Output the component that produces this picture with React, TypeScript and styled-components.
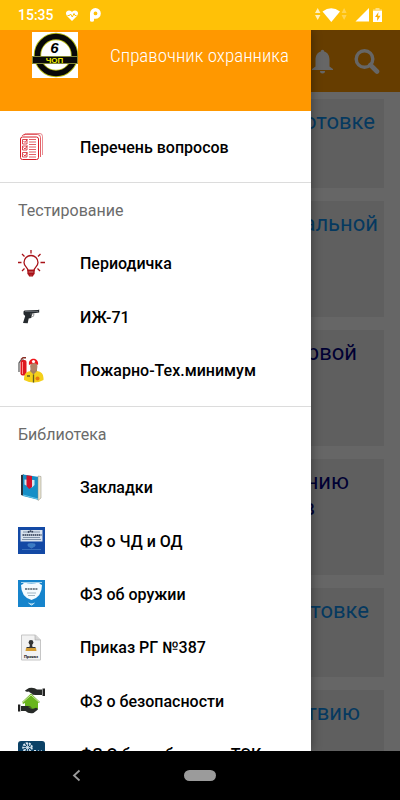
import React from "react";
import styled, { createGlobalStyle } from "styled-components";

const GlobalStyle = createGlobalStyle`
  * { box-sizing: border-box; }
  body { margin: 0; background: #fff; font-family: Roboto, sans-serif; }
  #root { height: 100vh; }
`;

const Screen = styled.div`
  display: flex;
  flex-direction: column;
  height: 100vh;
  overflow: hidden;
`;

const StatusBar = styled.header`
  display: flex;
  align-items: center;
  flex: none;
  height: 30px;
  padding: 0 18px;
  background: #ffc107;
  color: #fff;
`;

const Clock = styled.time`
  font-size: 14px;
  line-height: 16px;
  font-weight: 500;
  margin-right: 12px;
`;

const StatusIcons = styled.div<{ $end?: boolean }>`
  display: flex;
  align-items: center;
  gap: ${(p) => (p.$end ? 3 : 12)}px;
  margin-left: ${(p) => (p.$end ? "auto" : "0")};
`;

const Stage = styled.div`
  position: relative;
  flex: 1;
  min-height: 0;
  overflow: hidden;
`;

const Page = styled.main`
  height: 100%;
  overflow: hidden;
  background: #fff;
`;

const AppBar = styled.div`
  display: flex;
  align-items: center;
  justify-content: flex-end;
  gap: 20px;
  height: 62px;
  padding: 0 20px;
  background: #ff9800;
`;

const IconButton = styled.button`
  display: flex;
  padding: 0;
  border: 0;
  background: none;
`;

const Cards = styled.div`
  display: flex;
  flex-direction: column;
  gap: 13px;
  padding: 7px 16px;
`;

const Card = styled.a<{ $tall?: boolean; $visited?: boolean; $inset: number }>`
  flex: none;
  min-height: ${(p) => (p.$tall ? 116 : 89)}px;
  padding: 10px ${(p) => p.$inset}px 10px 16px;
  background: #ededed;
  color: ${(p) => (p.$visited ? "#000080" : "#0e90ee")};
  font-size: 22px;
  line-height: 26px;
  text-align: right;
  text-decoration: none;
`;

const CardLine = styled.span<{ $inset?: number }>`
  display: block;
  padding-right: ${(p) => p.$inset ?? 0}px;
`;

const Scrim = styled.div`
  position: absolute;
  inset: 0;
  background: rgba(0, 0, 0, 0.6);
`;

const Drawer = styled.aside`
  position: absolute;
  top: 0;
  bottom: 0;
  left: 0;
  width: 80%;
  max-width: 311px;
  overflow: hidden;
  background: #fff;
  box-shadow: 0 0 10px rgba(0, 0, 0, 0.4);
`;

const DrawerHeader = styled.div`
  display: flex;
  align-items: flex-start;
  gap: 32px;
  height: 81px;
  padding: 2px 16px 0 32px;
  background: #ff9800;

  svg { flex: none; }
`;

const DrawerTitle = styled.h1`
  margin: 0;
  padding-top: 12px;
  color: #fff;
  font-family: "Liberation Sans Narrow", "Roboto Condensed", Roboto, sans-serif;
  font-size: 19px;
  line-height: 24px;
  font-weight: 300;
  white-space: nowrap;
`;

const Group = styled.section<{ $height: number }>`
  display: grid;
  grid-auto-rows: 1fr;
  align-items: center;
  min-height: ${(p) => p.$height}px;
  padding: 0 18px 9px;

  &:first-child { padding-top: 9px; }
  & + & { border-top: 1px solid #dcdcdc; }
`;

const GroupTitle = styled.h2`
  margin: 0;
  padding-top: 2px;
  color: #6b6b6b;
  font-size: 16px;
  line-height: 20px;
  font-weight: 400;
`;

const Row = styled.a`
  display: flex;
  align-items: center;
  gap: 35px;
  color: #000;
  font-size: 16px;
  line-height: 20px;
  font-weight: 500;
  text-decoration: none;
  white-space: nowrap;

  svg { flex: none; }
`;

const RowLabel = styled.span`
  padding-top: 2px;
`;

const NavBar = styled.footer`
  display: grid;
  grid-template-columns: 1fr auto 1fr;
  align-items: center;
  flex: none;
  height: 49px;
  padding-left: 72px;
  padding-right: 72px;
  background: #000;
`;

const HomePill = styled.button`
  width: 32px;
  height: 11px;
  padding: 0;
  border: 0;
  border-radius: 6px;
  background: #9b9b9b;
`;

const Logo = () => (
  <svg width="46" height="46" viewBox="0 0 46 46" role="img" aria-label="6 ЧОП">
    <rect width="46" height="46" fill="#fff" />
    <circle cx="24" cy="23" r="18.5" fill="#fff" stroke="#b9bd18" strokeWidth="7.4" />
    <circle cx="24" cy="23" r="18.5" fill="none" stroke="#080808" strokeWidth="5.6" />
    <text x="22.5" y="21" textAnchor="middle" fontFamily="Liberation Sans" fontStyle="italic" fontWeight="700" fontSize="15">6</text>
    <rect x="0.5" y="24.5" width="45" height="7" fill="#0a0a0a" stroke="#83883a" />
    <text x="22.5" y="31" textAnchor="middle" fontFamily="Liberation Sans" fontWeight="700" fontSize="8" fill="#f0f000">ЧОП</text>
  </svg>
);

const HeartIcon = () => (
  <svg width="12" height="11" viewBox="0 0 12 11">
    <path d="M6 11 1 6C-1 3.500 0 .500 3 .500 4.500.500 5.500 1.300 6 2 6.500 1.300 7.500.500 9 .500c3 0 4 3 2 5.500Z" fill="#fff" />
    <path d="M1.500 5.500h2l1-1.500 1.800 3L8 3.500l1 2h1.500" fill="none" stroke="#ffc107" strokeWidth="1" />
  </svg>
);

const PIcon = () => (
  <svg width="11" height="14" viewBox="0 0 11 14">
    <path d="M0 12.500V5.500a5.400 5.400 0 1 1 5.400 5.300H4v1.700q0 1.300-2 1.300t-2-1.300ZM5.500 3.500a1.700 1.700 0 1 0 0 3.800A1.700 1.700 0 1 0 5.500 3.500Z" fill="#fff" fillRule="evenodd" />
  </svg>
);

const WifiIcon = () => (
  <svg width="32" height="14" viewBox="0 0 32 14">
    <path d="m0 5 2.700-5 2.700 5ZM0 7h5.400L2.700 12Z" fill="#fff" opacity=".75" />
    <path d="M7.500 3.500Q16.300-3 25 3.500L16.300 14Z" fill="#fff" />
    <path d="m26.600 5 2.500-5 2.500 5ZM26.600 7h5l-2.500 5Z" fill="#fff" opacity=".3" />
  </svg>
);

const SignalIcon = () => (
  <svg width="20" height="14" viewBox="0 0 20 14">
    <path d="M19 0v13.500H5.500Z" fill="#fff" />
  </svg>
);

const BatteryIcon = () => (
  <svg width="9" height="14" viewBox="0 0 9 14">
    <path d="M0 1.500h9V4H0ZM2.500 0h4v2h-4Z" fill="#fff" opacity=".5" />
    <path d="M0 3h9v11H0Z" fill="#fff" />
    <path d="M5.500 4 2 9h2.200v4L7.500 7.800H5Z" fill="#ffb000" />
  </svg>
);

const BellIcon = () => (
  <svg width="21" height="25" viewBox="0 0 21 25">
    <path d="M8.800 2.500a1.700 1.700 0 0 1 3.400 0C16 3.500 17.500 7 17.500 11v6.500L21 20v1H0v-1l3.500-2.500V11C3.500 7 5 3.500 8.800 2.500ZM8 22h5a2.500 2.500 0 0 1-5 0Z" fill="#fff" />
  </svg>
);

const SearchIcon = () => (
  <svg width="27" height="25" viewBox="0 0 27 25" fill="none" stroke="#fff">
    <circle cx="11.500" cy="10" r="8.300" strokeWidth="3.400" />
    <path d="m17.500 16 6.500 6.500" strokeWidth="4.600" strokeLinecap="round" />
  </svg>
);

const ListIcon = () => (
  <svg width="27" height="27" viewBox="0 0 27 27" fill="none" stroke="#d51c26">
    <path d="M6 2.500Q6.500 0 8.500.500H22q2.500 0 2.500 3V22" opacity=".5" />
    <path d="M4 3q.500-1.500 3-1.500h12.500q3 0 3 3V24" opacity=".7" />
    <rect x="2.500" y="4" width="18" height="22.500" rx="2" fill="#fff" />
    <path d="M4.500 6.500H9V11H4.500ZM4.500 13H9v4H4.500ZM4.500 19.500H9V24H4.500ZM5.500 8l1.500 1.500L9.500 6M5.500 14.500 7 16l2.500-3.500M5.500 21.500 7 23l2.500-3.500" strokeWidth=".8" />
    <path d="M11 6.500h7M11 9h7M11 11.500h7M11 14h7M11 16.500h7M11 19h7M11 21.500h7M11 24h7" opacity=".7" />
  </svg>
);

const BulbIcon = () => (
  <svg width="27" height="27" viewBox="0 0 27 27" fill="none" stroke="#a81117" strokeWidth="1.300">
    <path d="M10 20.500c0-3-4-4-4-8a7 7 0 0 1 14 0c0 4-4 5-4 8Z" />
    <path d="M10 20.500h6v3h-6ZM10.500 24h5l-1 1.800h-3Z" fill="#c35d60" />
    <path d="M13 0v3.500M4 4l2.500 2.500M22.500 4 20 6.500M0 12.500h3.500M22.500 12.500H27M4 21l2.500-2.500M22 21l-2.500-2.500" />
  </svg>
);

const GunIcon = () => (
  <svg width="27" height="27" viewBox="0 0 27 27">
    <path d="m5.500 8.500 1-1L20 7l1.200-.5v3l-7 1-1 4.500-2.500.5-1 4.800L5 20l2.200-7-1.700-1.700Z" fill="#252a2e" />
    <path d="M7 8.500h13" stroke="#6c7176" strokeWidth=".8" />
    <path d="M12 11h4q.5 3-3 3" fill="none" stroke="#777" strokeWidth=".7" />
  </svg>
);

const FireIcon = () => (
  <svg width="27" height="27" viewBox="0 0 27 27">
    <path d="M1 15V6l2-3h3" fill="none" stroke="#555" strokeWidth="1.200" />
    <rect x="2.500" y="3" width="6" height="15.500" rx="2" fill="#dd1720" />
    <path d="M4.500 5v12" stroke="#ff8f8f" />
    <path d="M3 2.500 5 .8h3" stroke="#8a3027" strokeWidth="1.500" fill="none" />
    <path d="M6 21q0-6 6.500-7h6.500q6.500 1 6.500 7v2q-9.500 5-19.500 0Z" fill="#f4d01b" />
    <path d="m12 14 3.500 3.500L19 14v-3h-6Z" fill="#a58162" />
    <ellipse cx="15.800" cy="9.500" rx="3.600" ry="4.500" fill="#b08469" />
    <path d="M11 8C9.500-.5 21.500-.5 20 8l-3-2-3 .5Z" fill="#ef161b" />
    <circle cx="15.500" cy="4.500" r="1.600" fill="#fff" />
    <path d="M15.500 17.500v8M9 19h3" stroke="#625b25" strokeWidth="1.300" />
    <circle cx="19.500" cy="21.500" r="2" fill="#e77810" />
  </svg>
);

const BookIcon = () => (
  <svg width="27" height="27" viewBox="0 0 27 27">
    <path d="m3 1 3-.5V22l-3-1Z" fill="#28343e" />
    <path d="m5 .5 16 2.500v23L5 22Z" fill="#168fc7" />
    <path d="m20 2 3 .5V24l-3 2.500Z" fill="#ece6d3" stroke="#8b887b" strokeWidth=".5" />
    <path d="m5 21 15 4" stroke="#68c5e6" />
    <path d="M6.500 5.500 16.500 6v5l-2.500 2.500-4-1-3.500-2Z" fill="#d4e6ee" />
    <path d="M8.500 1.200 14 2v11l-2.800 2L8.500 12Z" fill="#d1122b" />
  </svg>
);

const BlueBookIcon = () => (
  <svg width="27" height="27" viewBox="0 0 27 27">
    <path d="M0 0h27v27H0Z" fill="#1349a5" />
    <path d="M2.500 3h22v11.500h-22Z" fill="#d8e2ee" />
    <path d="M5 5h17M5 10.500h17M4 12.500h19" stroke="#687c95" strokeWidth=".8" />
    <path d="M4.500 8h19M10 5.500q3-3 5 0" stroke="#29364f" strokeWidth="1.600" strokeDasharray="1.500 .5" fill="none" />
    <path d="M10 17q3-1 7 0v2l-3.500 2L10 19ZM4 22.500h19" fill="#387cc6" stroke="#4a80c4" strokeWidth=".7" />
  </svg>
);

const ShieldBookIcon = () => (
  <svg width="27" height="27" viewBox="0 0 27 27">
    <path d="M0 0h27v27H0Z" fill="#1684cc" />
    <path d="M3 5q2.500-1 3-2.500 7 2 15 0 .500 1.500 3 2.500 0 12-10.500 15Q3 17 3 5Z" fill="#f4fbff" />
    <path d="M3 2.500h21" stroke="#a5d4ed" />
    <path d="M7 9h13" stroke="#52606a" strokeWidth="1.300" strokeDasharray="2 .6" />
    <path d="M9 13h9M10 15.500h7" stroke="#8ba4b3" strokeWidth=".8" />
    <path d="m10.500 23 1.500 1h3l1.500-1M12 24l1.500 1 1.500-1" stroke="#d2edf9" fill="none" />
  </svg>
);

const StampIcon = () => (
  <svg width="27" height="27" viewBox="0 0 27 27">
    <path d="M3.500 1h14l5 5v20h-19Z" fill="#f2f2f2" stroke="#c6c6c6" />
    <path d="M17 1v5h5.500" fill="#d6d6d6" stroke="#aaa" strokeWidth=".6" />
    <circle cx="13" cy="8.500" r="2.400" fill="#343434" />
    <path d="M12 10h2l.5 3h3v2h-9v-2h3Z" fill="#343434" />
    <path d="M8 14h10l.5 3h-11Z" fill="#d39b31" />
    <text x="13" y="24" textAnchor="middle" fontFamily="Liberation Sans" fontWeight="700" fontSize="4">Приказ</text>
  </svg>
);

const HandsIcon = () => (
  <svg width="27" height="27" viewBox="0 0 27 27">
    <path d="m4 15 9-8.500L22 15l-2 1v6H7v-6l-2 1Z" fill="#69b51c" />
    <path d="M4 16 13 8l9 8" fill="none" stroke="#d1e7ac" strokeWidth="1" />
    <path d="M7 3.500 11 1q5-1 8 1.500h5V8h-5q-4 .5-6-1.500h4q-5 0-6-2-3 1-4-1Z" fill="#272a28" />
    <path d="M24.500 1.500H27V9h-2.500Z" fill="#222" />
    <path d="M20 22.500 15.500 26q-5 1-8-2H3v-5h5q4-.5 6 1.500h-4q3.500 1.500 6 1 3-2 4 1Z" fill="#272a28" />
    <path d="M0 17.500h2.300v7H0Z" fill="#222" />
  </svg>
);

const EnergyIcon = () => (
  <svg width="27" height="27" viewBox="0 0 27 27">
    <rect width="27" height="27" rx="3" fill="#0b4166" />
    <circle cx="9.500" cy="6.500" r="4.300" fill="none" stroke="#d9e7f1" strokeWidth="2" strokeDasharray="2 1" />
    <path d="M9.500 2v9M5 6.500h9M6.500 3.500l6 6M12.500 3.500l-6 6" stroke="#d9e7f1" strokeWidth=".8" />
    <path d="M16 18V9h2v2l3-2v2l3-2v9Z" fill="#d9e7f1" />
  </svg>
);

const BackIcon = () => (
  <svg width="9" height="13" viewBox="0 0 9 13" fill="none" stroke="#9b9b9b" strokeWidth="1.800">
    <path d="M7.500 1.500 2 6.500l5.500 5" />
  </svg>
);

interface CardData {
  lines: { text: string; inset?: number }[];
  tall?: boolean;
  visited?: boolean;
  inset: number;
}

const cards: CardData[] = [
  { lines: [{ text: "подготовке" }], inset: 9 },
  { lines: [{ text: "специальной" }], tall: true, inset: 6 },
  { lines: [{ text: "первой" }], tall: true, visited: true, inset: 27 },
  { lines: [{ text: "применению" }, { text: "в", inset: 34 }], tall: true, visited: true, inset: 35 },
  { lines: [{ text: "подготовке" }], inset: 15 },
  { lines: [{ text: "действию" }], tall: true, inset: 24 },
];

interface GroupData {
  title?: string;
  height: number;
  items: [string, React.ComponentType][];
}

const groups: GroupData[] = [
  { height: 71, items: [["Перечень вопросов", ListIcon]] },
  {
    title: "Тестирование",
    height: 224,
    items: [["Периодичка", BulbIcon], ["ИЖ-71", GunIcon], ["Пожарно-Тех.минимум", FireIcon]],
  },
  {
    title: "Библиотека",
    height: 384,
    items: [
      ["Закладки", BookIcon],
      ["ФЗ о ЧД и ОД", BlueBookIcon],
      ["ФЗ об оружии", ShieldBookIcon],
      ["Приказ РГ №387", StampIcon],
      ["ФЗ о безопасности", HandsIcon],
      ["ФЗ О без. объектов ТЭК", EnergyIcon],
    ],
  },
];

export default function App() {
  return (
    <>
      <GlobalStyle />
      <Screen>
        <StatusBar>
          <Clock>15:35</Clock>
          <StatusIcons>
            <HeartIcon />
            <PIcon />
          </StatusIcons>
          <StatusIcons $end>
            <WifiIcon />
            <SignalIcon />
            <BatteryIcon />
          </StatusIcons>
        </StatusBar>
        <Stage>
          <Page>
            <AppBar>
              <IconButton aria-label="Уведомления"><BellIcon /></IconButton>
              <IconButton aria-label="Поиск"><SearchIcon /></IconButton>
            </AppBar>
            <Cards>
              {cards.map((card, i) => (
                <Card key={i} href="#" $tall={card.tall} $visited={card.visited} $inset={card.inset}>
                  {card.lines.map((line) => (
                    <CardLine key={line.text} $inset={line.inset}>{line.text}</CardLine>
                  ))}
                </Card>
              ))}
            </Cards>
          </Page>
          <Scrim />
          <Drawer>
            <DrawerHeader>
              <Logo />
              <DrawerTitle>Справочник охранника</DrawerTitle>
            </DrawerHeader>
            <nav>
              {groups.map((group) => (
                <Group key={group.height} $height={group.height}>
                  {group.title && <GroupTitle>{group.title}</GroupTitle>}
                  {group.items.map(([label, Icon]) => (
                    <Row key={label} href="#">
                      <Icon />
                      <RowLabel>{label}</RowLabel>
                    </Row>
                  ))}
                </Group>
              ))}
            </nav>
          </Drawer>
        </Stage>
        <NavBar>
          <IconButton aria-label="Назад"><BackIcon /></IconButton>
          <HomePill aria-label="Домой" />
        </NavBar>
      </Screen>
    </>
  );
}
